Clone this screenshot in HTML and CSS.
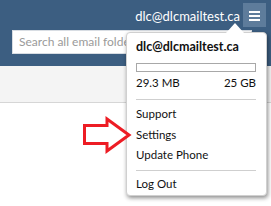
FILE: index.html
```html
<!DOCTYPE html>
<html>
<head>
<meta charset="utf-8">
<link rel="stylesheet" href="styles.css">
</head>
<body>
<header class="header">
  <div class="topbar">
    <span class="user">dlc@dlcmailtest.ca</span>
    <button class="menu-btn" aria-label="Menu">
      <svg width="11" height="10" viewBox="0 0 11 10"><rect x="0" y="0" width="11" height="2" fill="#fff"/><rect x="0" y="4" width="11" height="2" fill="#fff"/><rect x="0" y="8" width="11" height="2" fill="#fff"/></svg>
    </button>
  </div>
  <div class="searchrow">
    <div class="search">Search all email folders</div>
  </div>
</header>
<div class="toolbar"></div>
<main class="content"></main>

<div class="dropdown">
  <div class="caret"></div>
  <div class="dd-title">dlc@dlcmailtest.ca</div>
  <div class="quota"><div class="quota-fill" style="width:0%"></div></div>
  <div class="usage"><span>29.3 MB</span><span>25 GB</span></div>
  <div class="sep"></div>
  <ul class="items">
    <li>Support</li>
    <li>Settings</li>
    <li>Update Phone</li>
  </ul>
  <div class="sep sep2"></div>
  <ul class="items last">
    <li>Log Out</li>
  </ul>
</div>

<svg class="arrow" width="52" height="40" viewBox="0 0 52 40">
  <polygon points="2.5,9.5 25,9.5 25,3 47,19 25,35 25,27.5 2.5,27.5" fill="#fff" stroke="#ed1c24" stroke-width="3" stroke-linejoin="miter"/>
</svg>
</body>
</html>
```
FILE: styles.css
```css
html, body {
  margin: 0;
  padding: 0;
  background: #fff;
  font-family: Lato, "Open Sans", sans-serif;
}
.header {
  background: #3c5e81;
  height: 66px;
}
.topbar {
  display: flex;
  justify-content: flex-end;
  align-items: center;
  padding: 3px 5px 0 0;
  height: 24px;
  gap: 3px;
}
.user {
  color: #fff;
  font-size: 13px;
  line-height: 16px;
  margin-top: 2px;
}
.menu-btn {
  width: 23px;
  height: 24px;
  border: 0;
  padding: 0;
  margin: 0;
  background: #5e7c9b;
  display: flex;
  align-items: center;
  justify-content: center;
}
.menu-btn svg {
  display: block;
  margin-top: 1px;
}
.searchrow {
  padding: 3px 0 0 12px;
}
.search {
  width: 240px;
  height: 24px;
  box-sizing: border-box;
  background: #fff;
  border: 1px solid #d8dde3;
  padding: 0 6px;
  font-size: 12px;
  line-height: 22px;
  color: #9a9a9a;
  white-space: nowrap;
  overflow: hidden;
}
.toolbar {
  height: 36px;
  background: #f4f4f4;
  border-bottom: 1px solid #d6d6d6;
}
.dropdown {
  position: absolute;
  left: 126px;
  top: 32px;
  width: 141px;
  height: 164px;
  box-sizing: border-box;
  background: #fff;
  border-radius: 4px;
  border: 1px solid #d0d0d0;
  box-shadow: 1px 2px 4px rgba(0, 0, 0, 0.45);
  padding: 6px 10px 0 9px;
  color: #111;
}
.caret {
  position: absolute;
  left: 99px;
  top: -10px;
  width: 0;
  height: 0;
  border-left: 9px solid transparent;
  border-right: 9px solid transparent;
  border-bottom: 10px solid #fff;
}
.dd-title {
  font-weight: 700;
  font-size: 12.5px;
  line-height: 16px;
}
.quota {
  margin-top: 8px;
  height: 9px;
  box-sizing: border-box;
  border: 1px solid #a8a8a8;
  background: #fff;
}
.quota-fill {
  height: 100%;
  background: #5e7c9b;
}
.usage {
  display: flex;
  justify-content: space-between;
  font-size: 11.5px;
  line-height: 16px;
  margin-top: 3px;
}
.sep {
  height: 1px;
  background: #cfcfcf;
  margin-top: 8px;
}
.items {
  list-style: none;
  margin: 0;
  padding: 4px 0 0 0;
}
.items li {
  font-size: 11.5px;
  line-height: 20.5px;
  height: 20.5px;
}
.sep2 {
  margin-top: 4px;
}
.items.last {
  padding-top: 3px;
}
.arrow {
  position: absolute;
  left: 82px;
  top: 116px;
}
```
